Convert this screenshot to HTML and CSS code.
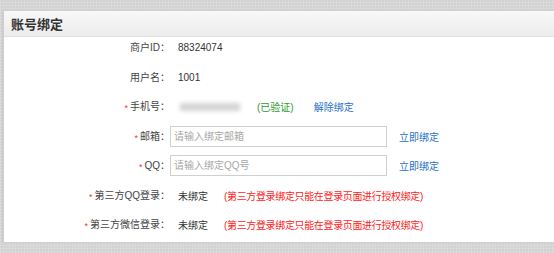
FILE: index.html
```html
<!DOCTYPE html>
<html lang="zh-CN">
<head>
<meta charset="utf-8">
<title>账号绑定</title>
<link rel="stylesheet" href="styles.css">
</head>
<body>
<div class="panel">
  <div class="panel-head">账号绑定</div>
  <div class="form">
    <div class="lbl">商户ID：</div>
    <div class="val">88324074</div>

    <div class="lbl">用户名：</div>
    <div class="val">1001</div>

    <div class="lbl"><span class="req">*</span>手机号：</div>
    <div class="val"><span class="blur"></span><span class="ok">(已验证)</span><a class="link unbind" href="#">解除绑定</a></div>

    <div class="lbl"><span class="req">*</span>邮箱：</div>
    <div class="val noindent"><input class="ipt" type="text" placeholder="请输入绑定邮箱"><a class="link bind" href="#">立即绑定</a></div>

    <div class="lbl"><span class="req">*</span>QQ：</div>
    <div class="val noindent"><input class="ipt" type="text" placeholder="请输入绑定QQ号"><a class="link bind" href="#">立即绑定</a></div>

    <div class="lbl"><span class="req">*</span>第三方QQ登录：</div>
    <div class="val">未绑定<span class="warn">(第三方登录绑定只能在登录页面进行授权绑定)</span></div>

    <div class="lbl"><span class="req">*</span>第三方微信登录：</div>
    <div class="val">未绑定<span class="warn">(第三方登录绑定只能在登录页面进行授权绑定)</span></div>
  </div>
</div>
</body>
</html>
```

FILE: styles.css
```css
html, body {
  margin: 0;
  padding: 0;
  overflow: hidden;
}
body {
  background: #dadada;
  background-image: repeating-linear-gradient(90deg, rgba(255,255,255,0.06) 0 1px, rgba(0,0,0,0.02) 1px 3px),
                    repeating-linear-gradient(0deg, rgba(255,255,255,0.05) 0 1px, rgba(0,0,0,0.02) 1px 3px);
  padding: 10px 0 0 3px;
  font-family: "Liberation Sans", "Noto Sans CJK SC", sans-serif;
  font-size: 10px;
  color: #333;
}
.panel {
  background: #fff;
  border: 1px solid #cfcfcf;
  border-right: none;
  box-shadow: 0 1px 2px rgba(0,0,0,0.12);
  width: 560px;
}
.panel-head {
  height: 25px;
  line-height: 25px;
  padding-left: 7px;
  font-size: 13px;
  font-weight: bold;
  color: #333;
  background: linear-gradient(#f8f8f8, #ececec);
  border-bottom: 1px solid #e2e2e2;
  font-family: "Noto Sans CJK SC", sans-serif;
}
.form {
  display: grid;
  grid-template-columns: 166px 1fr;
  grid-auto-rows: 21px;
  row-gap: 8.5px;
  padding: 0 0 7px 0;
}
.lbl {
  text-align: right;
  line-height: 21px;
  color: #444;
  white-space: nowrap;
}
.req {
  color: #e4393c;
  font-size: 9px;
  margin-right: 2px;
  vertical-align: -1px;
}
.val {
  display: flex;
  align-items: center;
  padding-left: 8px;
  white-space: nowrap;
  color: #333;
}
.val.noindent {
  padding-left: 0;
}
.blur {
  display: inline-block;
  width: 60px;
  height: 8px;
  background: #d4d4d4;
  filter: blur(2px);
  margin-left: 2px;
}
.ok {
  color: #2f9a2f;
  margin-left: 17px;
}
.link {
  color: #1f6fc5;
  text-decoration: none;
}
.unbind {
  margin-left: 20px;
}
.ipt {
  box-sizing: border-box;
  width: 217px;
  height: 21px;
  margin: 0;
  padding: 0 3px;
  border: 1px solid #d0d0d0;
  font-family: "Liberation Sans", "Noto Sans CJK SC", sans-serif;
  font-size: 10px;
  color: #333;
  outline: none;
}
.ipt::placeholder {
  color: #a8a8a8;
}
.bind {
  margin-left: 12px;
}
.warn {
  color: #ff1a1a;
  margin-left: 16px;
  letter-spacing: -0.35px;
}
```
